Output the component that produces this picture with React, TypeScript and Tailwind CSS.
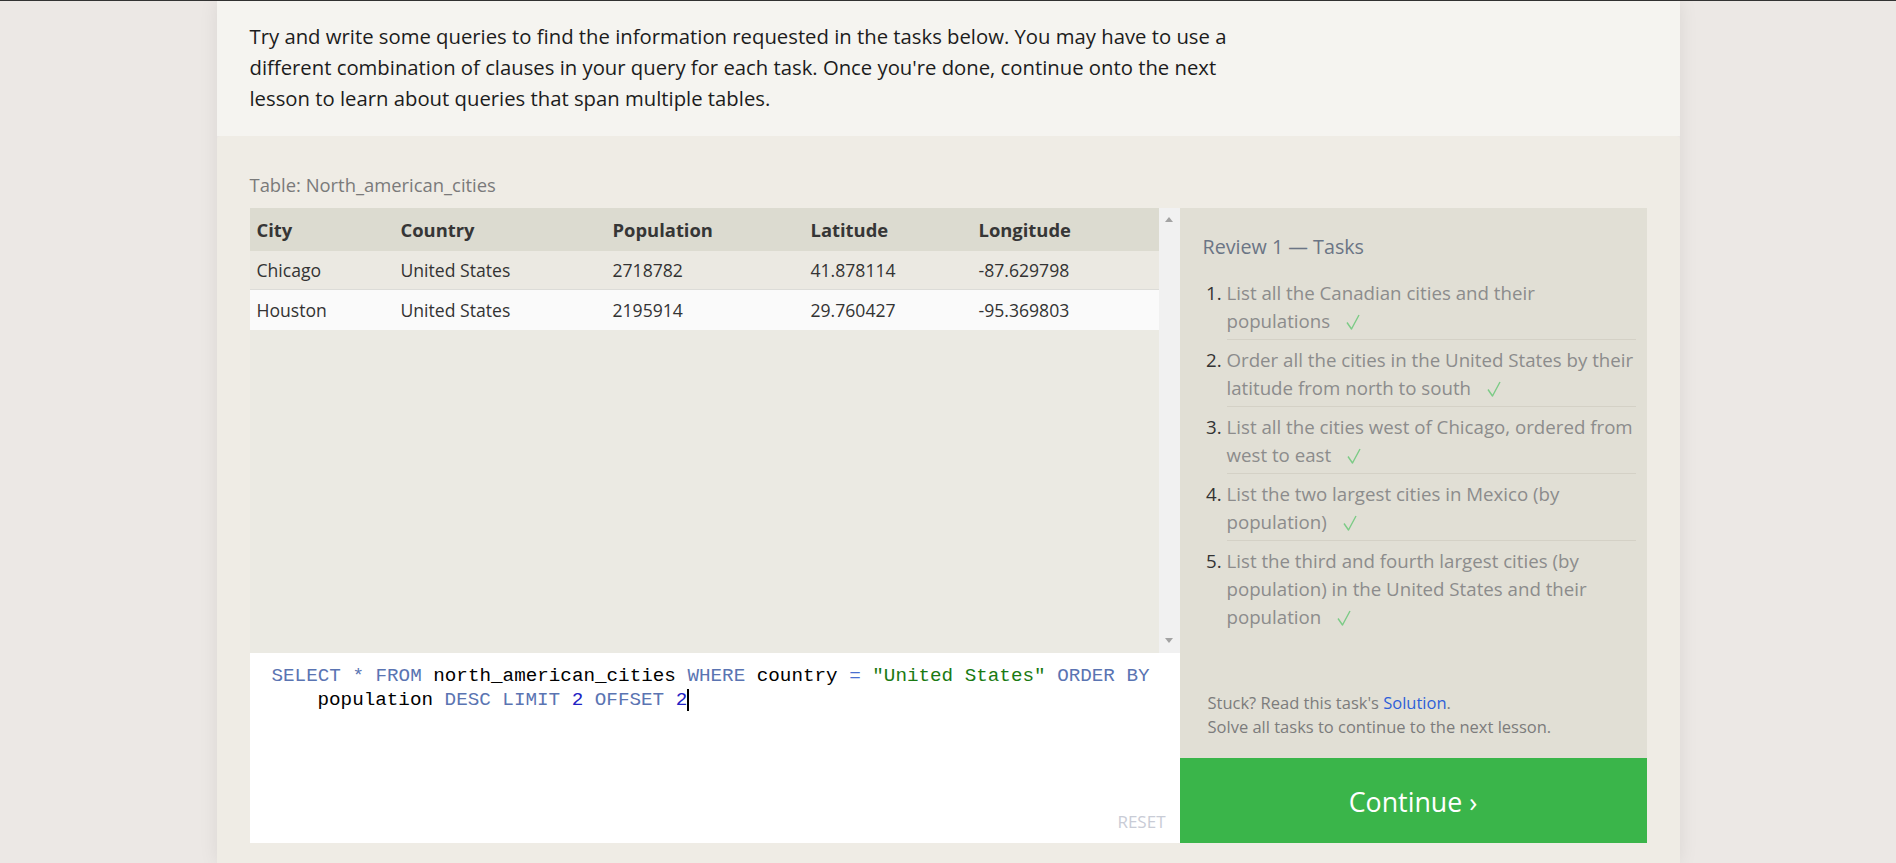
import React from 'react';

const columns = ['City', 'Country', 'Population', 'Latitude', 'Longitude'];

const rows = [
    ['Chicago', 'United States', '2718782', '41.878114', '-87.629798'],
    ['Houston', 'United States', '2195914', '29.760427', '-95.369803'],
];

const tasks: React.ReactNode[] = [
    <>List all the Canadian cities and their<br />populations</>,
    <>Order all the cities in the United States by their<br />latitude from north to south</>,
    <>List all the cities west of Chicago, ordered from<br />west to east</>,
    <>List the two largest cities in Mexico (by<br />population)</>,
    <>List the third and fourth largest cities (by<br />population) in the United States and their<br />population</>,
];

function Check() {
    return (
        <svg className="ml-[16px] inline-block h-[16px] w-[14px] align-[-2px]" viewBox="0 0 14 16" fill="none">
            <path d="M1 8.5 L5.5 15 L13 1" stroke="#7ccb86" strokeWidth="1.4" strokeLinejoin="round" />
        </svg>
    );
}

/**
 * Results table with its fake scrollbar
 */
function ResultTable() {
    return (
        <div className="flex h-[445px]">
            <div className="flex w-[909px] flex-col bg-[#ebeae3]">
                <div className="grid h-[43px] grid-cols-[144px_212px_198px_168px_1fr] items-center bg-[#dcdbd0] text-[18.4px] font-bold text-[#363636]">
                    {columns.map((c) => (
                        <div key={c} className="pl-[7px]">{c}</div>
                    ))}
                </div>
                {rows.map((row, i) => (
                    <div
                        key={row[0]}
                        className={
                            i === 0
                                ? 'grid h-[39px] grid-cols-[144px_212px_198px_168px_1fr] items-center border-b border-[#dcdcd8] bg-[#ebe9e2] text-[17.6px] text-[#333]'
                                : 'grid h-[40px] grid-cols-[144px_212px_198px_168px_1fr] items-center bg-[#fafafa] text-[17.6px] text-[#333]'
                        }
                    >
                        {row.map((cell, j) => (
                            <div key={j} className="pl-[7px]">{cell}</div>
                        ))}
                    </div>
                ))}
            </div>
            <div className="flex w-[21px] flex-col items-center justify-between bg-[#f1f1f1] pt-[9px] pb-[10px]">
                <div className="h-0 w-0 border-x-[4px] border-b-[5px] border-x-transparent border-b-[#a3a3a3]" />
                <div className="h-0 w-0 border-x-[4px] border-t-[5px] border-x-transparent border-t-[#a3a3a3]" />
            </div>
        </div>
    );
}

/**
 * SQL editor area
 */
function QueryEditor() {
    const kw = 'text-[#5a74b2]';
    const num = 'text-[#2222c4]';
    return (
        <div className="flex h-[190px] flex-col bg-white pt-[11px] pr-[14px] pb-[11px] pl-[22px]">
            <div className="flex-1 font-['Liberation_Mono',monospace] text-[19.25px] leading-[24px] whitespace-pre text-black">
                <div>
                    <span className={kw}>SELECT</span> <span className={kw}>*</span> <span className={kw}>FROM</span> north_american_cities{' '}
                    <span className={kw}>WHERE</span> country <span className="text-[#4a6fd0]">=</span>{' '}
                    <span className="text-[#1a7a12]">"United States"</span> <span className={kw}>ORDER</span> <span className={kw}>BY</span>
                </div>
                <div className="pl-[46px]">
                    population <span className={kw}>DESC</span> <span className={kw}>LIMIT</span> <span className={num}>2</span>{' '}
                    <span className={kw}>OFFSET</span> <span className={`${num} border-r-2 border-black`}>2</span>
                </div>
            </div>
            <div className="self-end text-[17px] leading-[20px] text-[#c9ccd6]">RESET</div>
        </div>
    );
}

/**
 * Task list panel and continue button
 */
function TasksPanel() {
    return (
        <div className="flex w-[467px] flex-col">
            <div className="flex flex-1 flex-col bg-[#e1dfd5] pt-[25px] pr-[11px] pb-[19px] pl-[23px]">
                <h3 className="text-[19.7px] leading-[28px] text-[#6b7585]">Review 1 — Tasks</h3>
                <ol className="mt-[12px] list-decimal pl-[24px] text-[18.7px] leading-[28px] text-[#8c8c8c] marker:text-[#333]">
                    {tasks.map((t, i) => (
                        <li key={i} className="whitespace-nowrap border-b border-[#d4d1c6] pt-[6px] pb-[4px] last:border-b-0">
                            {t}
                            <Check />
                        </li>
                    ))}
                </ol>
                <div className="mt-auto pl-[5px] text-[16.5px] leading-[24px] text-[#7c7c7c]">
                    <p>
                        Stuck? Read this task's <a className="text-[#2f5fd8]">Solution</a>.
                    </p>
                    <p>Solve all tasks to continue to the next lesson.</p>
                </div>
            </div>
            <button className="h-[85px] bg-[#3ab54a] pt-[4px] text-[26.8px] text-white">Continue ›</button>
        </div>
    );
}

export default function App() {
    return (
        <div className="min-h-[863px] border-t border-[#333] bg-[#ece8e5] font-['Open_Sans',sans-serif]">
            <div className="mx-auto w-[1463px] shadow-[0_0_18px_rgba(0,0,0,0.08)]">
                <section className="bg-[#f5f4f0] pt-[20px] pb-[22px] pl-[33px]">
                    <p className="max-w-[1000px] text-[20.3px] leading-[31px] text-[#1c1c1c]">
                        Try and write some queries to find the information requested in the tasks below. You may have to use a
                        different combination of clauses in your query for each task. Once you're done, continue onto the next
                        lesson to learn about queries that span multiple tables.
                    </p>
                </section>
                <section className="rounded-t-[4px] bg-[#efece5] px-[33px] pt-[37px] pb-[20px]">
                    <div className="text-[18.4px] leading-[24px] text-[#7a7a7a]">Table: North_american_cities</div>
                    <div className="mt-[11px] flex h-[635px]">
                        <div className="flex w-[930px] flex-col">
                            <ResultTable />
                            <QueryEditor />
                        </div>
                        <TasksPanel />
                    </div>
                </section>
            </div>
        </div>
    );
}
